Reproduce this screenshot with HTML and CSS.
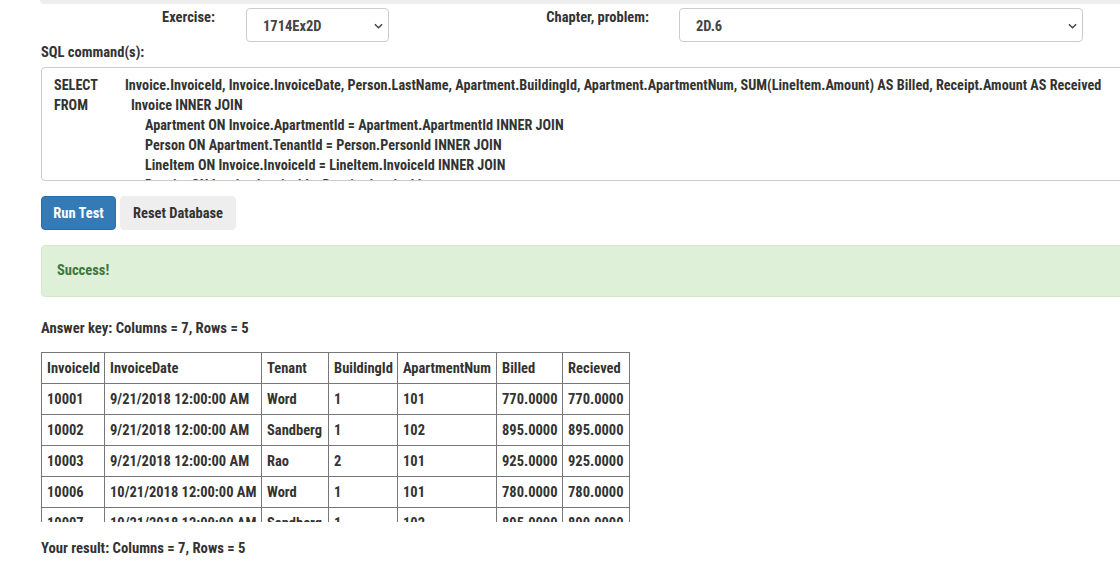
FILE: index.html
```html
<!DOCTYPE html>
<html>
<head>
<meta charset="utf-8">
<link rel="stylesheet" href="styles.css">
</head>
<body>
<div class="page">
  <div class="topbar"></div>
  <div class="pick-row">
    <label class="pick-label lbl-ex">Exercise:</label>
    <div class="select sel-ex"><span>1714Ex2D</span><svg class="chev" viewBox="0 0 10 6" width="9" height="6"><path d="M1 1l4 4 4-4" fill="none" stroke="#444" stroke-width="1.6"/></svg></div>
    <label class="pick-label lbl-ch">Chapter, problem:</label>
    <div class="select sel-ch"><span>2D.6</span><svg class="chev" viewBox="0 0 10 6" width="9" height="6"><path d="M1 1l4 4 4-4" fill="none" stroke="#444" stroke-width="1.6"/></svg></div>
  </div>
  <div class="sql-label">SQL command(s):</div>
  <div class="sql-box">
    <div class="sql-line"><span class="kw kw-select">SELECT</span>Invoice.InvoiceId, Invoice.InvoiceDate, Person.LastName, Apartment.BuildingId, Apartment.ApartmentNum, SUM(LineItem.Amount) AS Billed, Receipt.Amount AS Received</div>
    <div class="sql-line"><span class="kw kw-from">FROM</span>Invoice INNER JOIN</div>
    <div class="sql-line join">Apartment ON Invoice.ApartmentId = Apartment.ApartmentId INNER JOIN</div>
    <div class="sql-line join">Person ON Apartment.TenantId = Person.PersonId INNER JOIN</div>
    <div class="sql-line join">LineItem ON Invoice.InvoiceId = LineItem.InvoiceId INNER JOIN</div>
    <div class="sql-line join">Receipt ON Invoice.InvoiceId = Receipt.InvoiceId</div>
  </div>
  <div class="buttons">
    <button class="btn btn-primary">Run Test</button>
    <button class="btn btn-default">Reset Database</button>
  </div>
  <div class="alert">Success!</div>
  <div class="caption cap-key">Answer key: Columns = 7, Rows = 5</div>
  <div class="table-wrap">
    <table class="grid">
      <colgroup><col class="c1"><col class="c2"><col class="c3"><col class="c4"><col class="c5"><col class="c6"><col class="c7"></colgroup>
      <tr><th>InvoiceId</th><th>InvoiceDate</th><th>Tenant</th><th>BuildingId</th><th>ApartmentNum</th><th>Billed</th><th>Recieved</th></tr>
      <tr><td>10001</td><td>9/21/2018 12:00:00 AM</td><td>Word</td><td>1</td><td>101</td><td>770.0000</td><td>770.0000</td></tr>
      <tr><td>10002</td><td>9/21/2018 12:00:00 AM</td><td>Sandberg</td><td>1</td><td>102</td><td>895.0000</td><td>895.0000</td></tr>
      <tr><td>10003</td><td>9/21/2018 12:00:00 AM</td><td>Rao</td><td>2</td><td>101</td><td>925.0000</td><td>925.0000</td></tr>
      <tr><td>10006</td><td>10/21/2018 12:00:00 AM</td><td>Word</td><td>1</td><td>101</td><td>780.0000</td><td>780.0000</td></tr>
      <tr><td>10007</td><td>10/21/2018 12:00:00 AM</td><td>Sandberg</td><td>1</td><td>102</td><td>895.0000</td><td>800.0000</td></tr>
    </table>
  </div>
  <div class="caption cap-res">Your result: Columns = 7, Rows = 5</div>
</div>
</body>
</html>
```
FILE: styles.css
```css
html, body {
  margin: 0;
  padding: 0;
  overflow: hidden;
  background: #fff;
}
body {
  font-family: "Roboto Condensed", "Roboto", sans-serif;
  font-stretch: 75%;
  font-weight: bold;
  font-size: 14.5px;
  color: #333;
}
.page {
  width: 1200px;
  padding-left: 41px;
}
.topbar {
  height: 4px;
  margin-left: -1px;
  background: #eee;
  border-bottom-left-radius: 4px;
}
.pick-row {
  display: flex;
  align-items: flex-start;
  margin-top: 4px;
  height: 34px;
}
.pick-label {
  line-height: 18px;
  padding-top: 1px;
  text-align: right;
}
.lbl-ex { width: 174px; }
.lbl-ch { width: 260px; }
.select {
  box-sizing: border-box;
  height: 34px;
  border: 1px solid #ccc;
  border-radius: 4px;
  display: flex;
  align-items: center;
  justify-content: space-between;
  padding: 2px 5px 0 16px;
  color: #444;
}
.sel-ex { width: 143px; margin-left: 31px; }
.sel-ch { width: 404px; margin-left: 30px; }
.sql-label {
  margin-top: 2px;
  line-height: 18px;
}
.sql-box {
  box-sizing: border-box;
  margin-top: 5px;
  height: 114px;
  border: 1px solid #ccc;
  border-radius: 4px;
  padding: 7px 12px 0;
  overflow: hidden;
  font-size: 14.2px;
}
.sql-line {
  line-height: 20px;
  white-space: nowrap;
}
.kw { display: inline-block; }
.kw-select { width: 71px; }
.kw-from { width: 77px; }
.join { padding-left: 91px; }
.buttons {
  display: flex;
  gap: 4px;
  margin-top: 15px;
}
.btn {
  font: inherit;
  height: 34px;
  border-radius: 4px;
  padding: 0;
  white-space: nowrap;
  cursor: pointer;
}
.btn-primary {
  width: 75px;
  background: #337ab7;
  border: 1px solid #2e6da4;
  color: #fff;
}
.btn-default {
  width: 116px;
  background: #eee;
  border: 1px solid #eee;
  color: #333;
}
.alert {
  box-sizing: border-box;
  margin-top: 15px;
  height: 52px;
  background: #dff0d8;
  border: 1px solid #d6e9c6;
  border-radius: 4px;
  color: #3c763d;
  padding: 0 15px;
  line-height: 50px;
}
.caption {
  line-height: 18px;
  font-size: 14.7px;
}
.cap-key { margin-top: 22px; }
.table-wrap {
  margin-top: 15px;
  height: 170px;
  overflow: hidden;
  width: 600px;
}
.grid {
  border-collapse: collapse;
  table-layout: fixed;
  width: 589px;
}
.c1 { width: 63px; }
.c2 { width: 157px; }
.c3 { width: 67px; }
.c4 { width: 69px; }
.c5 { width: 99px; }
.c6 { width: 66px; }
.c7 { width: 67px; }
.grid th, .grid td {
  border: 1px solid #777;
  height: 31px;
  padding: 0 5px;
  text-align: left;
  white-space: nowrap;
  box-sizing: border-box;
}
.cap-res { margin-top: 17px; }
```
